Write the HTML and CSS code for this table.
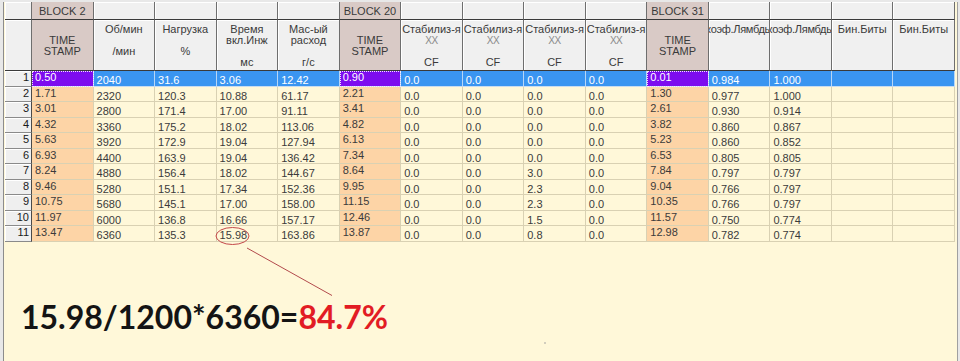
FILE: index.html
```html
<!DOCTYPE html>
<html lang="ru">
<head>
<meta charset="utf-8">
<title>Таблица</title>
<link rel="stylesheet" href="styles.css">
</head>
<body>
<div class="panel">
  <div class="grid">
    <div class="h h1"></div>
    <div class="h h1 blk">BLOCK 2</div>
    <div class="h h1"></div><div class="h h1"></div><div class="h h1"></div><div class="h h1"></div>
    <div class="h h1 blk">BLOCK 20</div>
    <div class="h h1"></div><div class="h h1"></div><div class="h h1"></div><div class="h h1"></div>
    <div class="h h1 blk">BLOCK 31</div>
    <div class="h h1"></div><div class="h h1"></div><div class="h h1"></div><div class="h h1"></div>

    <div class="h h2"></div>
    <div class="h h2 blk"><span></span><span>TIME</span><span>STAMP</span><span></span></div>
    <div class="h h2"><span>Об/мин</span><span></span><span>/мин</span><span></span></div>
    <div class="h h2"><span>Нагрузка</span><span></span><span>%</span><span></span></div>
    <div class="h h2"><span>Время</span><span>вкл.Инж</span><span></span><span>мс</span></div>
    <div class="h h2"><span>Мас-ый</span><span>расход</span><span></span><span>г/с</span></div>
    <div class="h h2 blk"><span></span><span>TIME</span><span>STAMP</span><span></span></div>
    <div class="h h2"><span>Стабилиз-я</span><span class="xx">XX</span><span></span><span>CF</span></div>
    <div class="h h2"><span>Стабилиз-я</span><span class="xx">XX</span><span></span><span>CF</span></div>
    <div class="h h2"><span>Стабилиз-я</span><span class="xx">XX</span><span></span><span>CF</span></div>
    <div class="h h2"><span>Стабилиз-я</span><span class="xx">XX</span><span></span><span>CF</span></div>
    <div class="h h2 blk"><span></span><span>TIME</span><span>STAMP</span><span></span></div>
    <div class="h h2"><span class="clip"><span>коэф.Лямбды</span></span></div>
    <div class="h h2"><span class="clip"><span>коэф.Лямбды</span></span></div>
    <div class="h h2"><span>Бин.Биты</span></div>
    <div class="h h2"><span>Бин.Биты</span></div>

    <div class="rn">1</div><div class="c ts sel foc">0.50</div><div class="c sel">2040</div><div class="c sel">31.6</div><div class="c sel">3.06</div><div class="c sel">12.42</div><div class="c ts sel foc">0.90</div><div class="c sel">0.0</div><div class="c sel">0.0</div><div class="c sel">0.0</div><div class="c sel">0.0</div><div class="c ts sel foc">0.01</div><div class="c sel">0.984</div><div class="c sel">1.000</div><div class="c sel"></div><div class="c sel"></div>
    <div class="rn">2</div><div class="c ts">1.71</div><div class="c">2320</div><div class="c">120.3</div><div class="c">10.88</div><div class="c">61.17</div><div class="c ts">2.21</div><div class="c">0.0</div><div class="c">0.0</div><div class="c">0.0</div><div class="c">0.0</div><div class="c ts">1.30</div><div class="c">0.977</div><div class="c">1.000</div><div class="c"></div><div class="c"></div>
    <div class="rn">3</div><div class="c ts">3.01</div><div class="c">2800</div><div class="c">171.4</div><div class="c">17.00</div><div class="c">91.11</div><div class="c ts">3.41</div><div class="c">0.0</div><div class="c">0.0</div><div class="c">0.0</div><div class="c">0.0</div><div class="c ts">2.61</div><div class="c">0.930</div><div class="c">0.914</div><div class="c"></div><div class="c"></div>
    <div class="rn">4</div><div class="c ts">4.32</div><div class="c">3360</div><div class="c">175.2</div><div class="c">18.02</div><div class="c">113.06</div><div class="c ts">4.82</div><div class="c">0.0</div><div class="c">0.0</div><div class="c">0.0</div><div class="c">0.0</div><div class="c ts">3.82</div><div class="c">0.860</div><div class="c">0.867</div><div class="c"></div><div class="c"></div>
    <div class="rn">5</div><div class="c ts">5.63</div><div class="c">3920</div><div class="c">172.9</div><div class="c">19.04</div><div class="c">127.94</div><div class="c ts">6.13</div><div class="c">0.0</div><div class="c">0.0</div><div class="c">0.0</div><div class="c">0.0</div><div class="c ts">5.23</div><div class="c">0.860</div><div class="c">0.852</div><div class="c"></div><div class="c"></div>
    <div class="rn">6</div><div class="c ts">6.93</div><div class="c">4400</div><div class="c">163.9</div><div class="c">19.04</div><div class="c">136.42</div><div class="c ts">7.34</div><div class="c">0.0</div><div class="c">0.0</div><div class="c">0.0</div><div class="c">0.0</div><div class="c ts">6.53</div><div class="c">0.805</div><div class="c">0.805</div><div class="c"></div><div class="c"></div>
    <div class="rn">7</div><div class="c ts">8.24</div><div class="c">4880</div><div class="c">156.4</div><div class="c">18.02</div><div class="c">144.67</div><div class="c ts">8.64</div><div class="c">0.0</div><div class="c">0.0</div><div class="c">3.0</div><div class="c">0.0</div><div class="c ts">7.84</div><div class="c">0.797</div><div class="c">0.797</div><div class="c"></div><div class="c"></div>
    <div class="rn">8</div><div class="c ts">9.46</div><div class="c">5280</div><div class="c">151.1</div><div class="c">17.34</div><div class="c">152.36</div><div class="c ts">9.95</div><div class="c">0.0</div><div class="c">0.0</div><div class="c">2.3</div><div class="c">0.0</div><div class="c ts">9.04</div><div class="c">0.766</div><div class="c">0.797</div><div class="c"></div><div class="c"></div>
    <div class="rn">9</div><div class="c ts">10.75</div><div class="c">5680</div><div class="c">145.1</div><div class="c">17.00</div><div class="c">158.00</div><div class="c ts">11.15</div><div class="c">0.0</div><div class="c">0.0</div><div class="c">2.3</div><div class="c">0.0</div><div class="c ts">10.35</div><div class="c">0.766</div><div class="c">0.797</div><div class="c"></div><div class="c"></div>
    <div class="rn">10</div><div class="c ts">11.97</div><div class="c">6000</div><div class="c">136.8</div><div class="c">16.66</div><div class="c">157.17</div><div class="c ts">12.46</div><div class="c">0.0</div><div class="c">0.0</div><div class="c">1.5</div><div class="c">0.0</div><div class="c ts">11.57</div><div class="c">0.750</div><div class="c">0.774</div><div class="c"></div><div class="c"></div>
    <div class="rn">11</div><div class="c ts">13.47</div><div class="c">6360</div><div class="c">135.3</div><div class="c">15.98</div><div class="c">163.86</div><div class="c ts">13.87</div><div class="c">0.0</div><div class="c">0.0</div><div class="c">0.8</div><div class="c">0.0</div><div class="c ts">12.98</div><div class="c">0.782</div><div class="c">0.774</div><div class="c"></div><div class="c"></div>
  </div>
  <div class="formula">15.98/1200*6360=<span class="red">84.7%</span></div>
</div>
<svg class="marks" width="960" height="361" viewBox="0 0 960 361" aria-hidden="true">
  <ellipse cx="232.5" cy="236" rx="16.5" ry="8.5" fill="none" stroke="#c4484a" stroke-width="1"/>
  <line x1="247" y1="248" x2="332" y2="295.5" stroke="#b24a4c" stroke-width="1"/>
  <circle cx="545" cy="343" r="0.8" fill="#9a9a9a"/>
</svg>
</body>
</html>
```
FILE: styles.css
```css
* { box-sizing: border-box; }
html, body { margin: 0; padding: 0; }
body {
  width: 960px;
  height: 361px;
  overflow: hidden;
  position: relative;
  background: #e8e8e8;
  font-family: "Liberation Sans", Arial, sans-serif;
}
.panel {
  margin: 2px 2px 0 3px;
  height: 359px;
  background: #fff8d9;
  border-left: 1px solid #8c8c8c;
  border-right: 1px solid #a0a0a0;
  padding-left: 1px;
}
.grid {
  display: grid;
  grid-template-columns: 27px repeat(15, 61.533px);
  grid-template-rows: 18px 51px repeat(11, 15.5px);
}
.h {
  background: #f0f0f0;
  border-right: 1px solid #6e6e6e;
  border-bottom: 1px solid #3a3a3a;
  box-shadow: inset 1px 1px 0 #ffffff;
  font-size: 11px;
  color: #3a3a3a;
  text-align: center;
  white-space: nowrap;
  overflow: hidden;
}
.h1 { line-height: 16px; padding-top: 1px; }
.h2 {
  padding-top: 4px;
  line-height: 11px;
  display: flex;
  flex-direction: column;
  align-items: center;
}
.h2 span { display: block; height: 11px; white-space: nowrap; flex-shrink: 0; }
.h2 .xx { font-size: 10px; color: #8a8a8a; letter-spacing: -0.5px; }
.h2 .clip {
  align-self: stretch;
  display: flex;
  justify-content: center;
  overflow: hidden;
  letter-spacing: -0.3px;
}
.blk { background: #d9cac6; color: #3a3a3a; box-shadow: none; }
.c {
  border-right: 1px solid #d9d1b3;
  border-bottom: 1px solid #d9d1b3;
  font-size: 11px;
  line-height: 13px;
  padding: 3px 0 0 3px;
  color: #3b3b3b;
  white-space: nowrap;
  overflow: hidden;
}
.ts { background: #fdd4a6; padding-top: 0; }
.rn {
  background: #efefef;
  border-right: 1px solid #4a4a4a;
  border-bottom: 1px solid #8a8a8a;
  box-shadow: inset 1px 1px 0 #ffffff;
  font-size: 11px;
  line-height: 13px;
  text-align: right;
  padding: 0 2px 0 0;
  color: #1a1a1a;
}
.sel {
  background: #3a95f1;
  color: #ffffff;
  border-right-color: #b8d6f6;
  border-bottom-color: #c9dcf0;
}
.foc {
  background: #7d0cef;
  outline: 1px dotted #f2e6ff;
  outline-offset: -1px;
}
.formula {
  margin: 55px 0 0 16px;
  font-family: Lato, "Open Sans", sans-serif;
  font-weight: 700;
  font-size: 32px;
  color: #141414;
  white-space: nowrap;
}
.red { color: #e21c24; }
.marks { position: absolute; left: 0; top: 0; pointer-events: none; }
```
